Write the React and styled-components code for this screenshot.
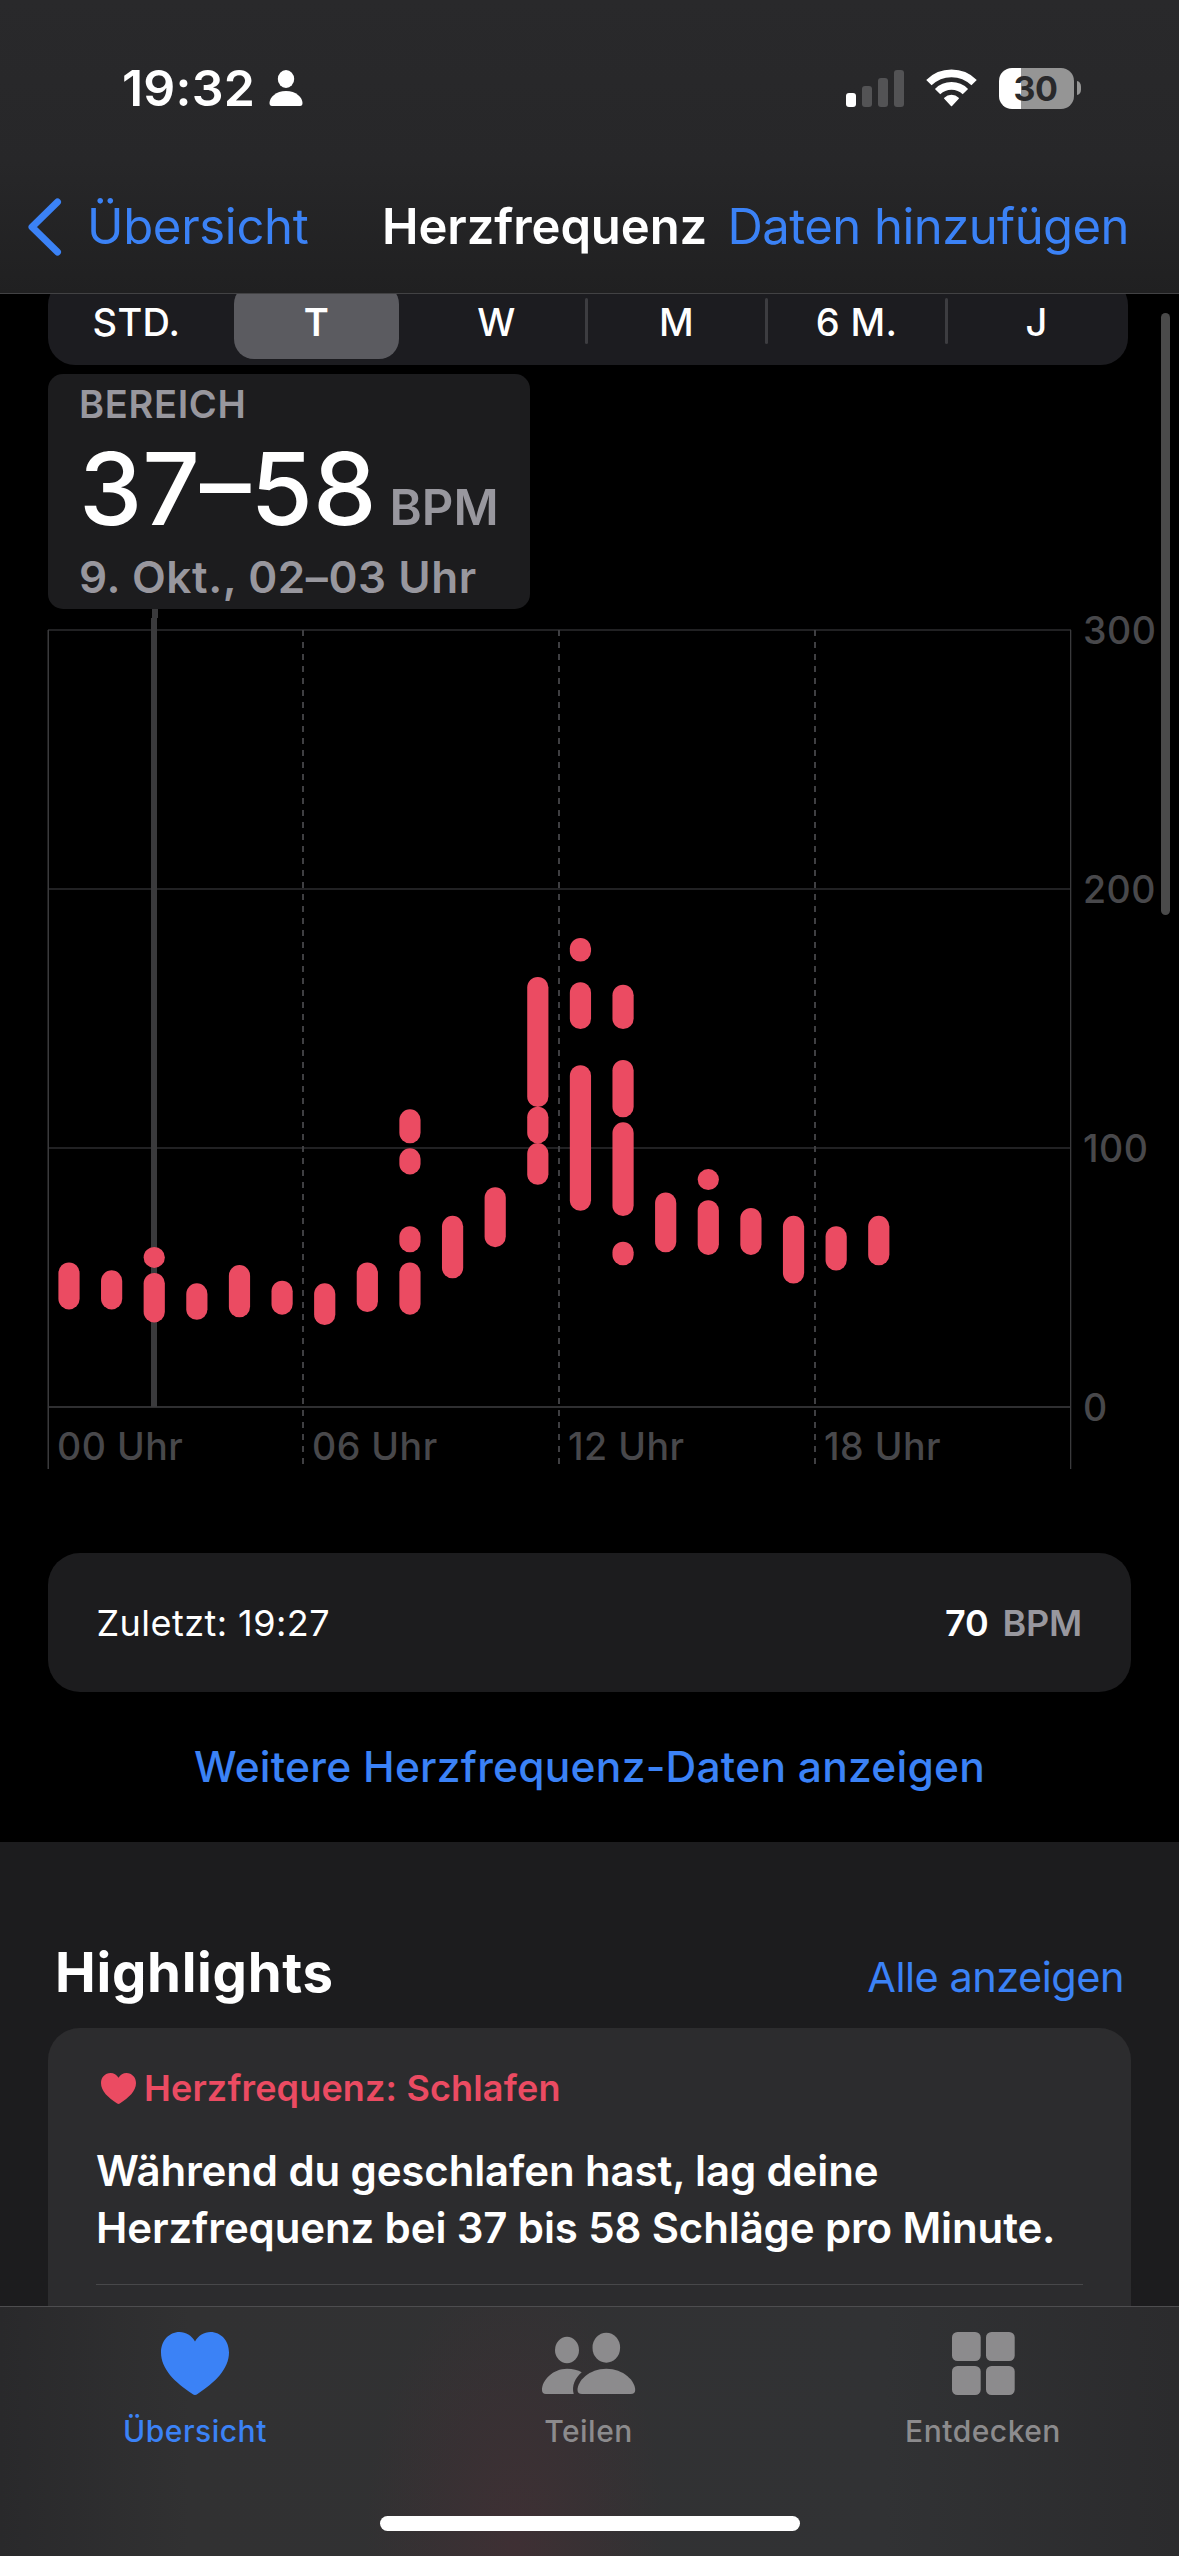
import React from 'react'
import styled, { createGlobalStyle } from 'styled-components'

const GlobalStyle = createGlobalStyle`
  * {
    box-sizing: border-box;
  }
  body {
    margin: 0;
    background: #000;
    font-family: Inter, 'Liberation Sans', sans-serif;
    color: #fff;
  }
`
const blue = '#3b82f6'
const pink = '#eb4b62'
const gray = '#98979e'

const Page = styled.div`
  display: flex;
  flex-direction: column;
  width: 1179px;
  height: 2556px;
  overflow: hidden;
  background: #000;
  position: relative;
`
const Header = styled.header`
  flex: none;
  height: 294px;
  background: linear-gradient(#29292b, #272729 55%, #202021);
  border-bottom: 1px solid #424244;
  position: relative;
  z-index: 1;
`
const StatusBar = styled.div`
  display: flex;
  justify-content: space-between;
  align-items: center;
  height: 176px;
  padding: 0 98px 0 122px;
`
const StatusGroup = styled.div`
  display: flex;
  align-items: center;
  gap: ${(props) => props.$gap}px;
`
const Time = styled.span`
  font-size: 50px;
  font-weight: 600;
  line-height: 60px;
  letter-spacing: 0.2px;
`
const Battery = styled.div`
  display: flex;
  align-items: center;
  gap: 3px;
`
const BatteryBody = styled.div`
  width: 75px;
  height: 41px;
  padding-right: 2px;
  border-radius: 13px;
  background: linear-gradient(90deg, #fff 30%, #959595 30%);
  color: #29292b;
  font-size: 34px;
  font-weight: 700;
  line-height: 41px;
  text-align: center;
  letter-spacing: -0.5px;
`
const BatteryNub = styled.div`
  width: 4px;
  height: 14px;
  border-radius: 0 5px 5px 0 / 0 7px 7px 0;
  background: #959595;
`
const Nav = styled.nav`
  display: flex;
  align-items: center;
  height: 102px;
  padding: 0 50px 0 28px;
  font-size: 49px;
  line-height: 60px;
  white-space: nowrap;
`
const BackLink = styled.a`
  display: flex;
  align-items: center;
  gap: 25px;
  width: 354px;
  color: ${blue};
  letter-spacing: -0.3px;
`
const NavTitle = styled.h1`
  margin: 0;
  font-size: 49px;
  font-weight: 600;
  letter-spacing: -0.1px;
`
const NavAction = styled.a`
  margin-left: auto;
  color: ${blue};
  letter-spacing: -0.55px;
`
const Content = styled.main`
  flex: 1;
  min-height: 0;
  overflow: hidden;
  display: flex;
  flex-direction: column;
`
const Segments = styled.div`
  flex: none;
  display: grid;
  grid-template-columns: repeat(6, 180px);
  width: 1080px;
  height: 87px;
  margin: -16px 0 0 48px;
  border-radius: 27px;
  background: #1c1c20;
`
const Segment = styled.div`
  display: flex;
  align-items: center;
  justify-content: center;
  margin: 6px 9px 6px 6px;
  border-radius: 20px;
  background: ${(props) => (props.$active ? '#5b5b60' : 'transparent')};
  font-size: 38px;
  font-weight: ${(props) => (props.$active ? 600 : 500)};
  line-height: 74px;
  letter-spacing: 0.3px;
  position: relative;

  &::after {
    content: '';
    display: ${(props) => (props.$divider ? 'block' : 'none')};
    position: absolute;
    right: -9px;
    top: 14px;
    width: 3px;
    height: 46px;
    border-radius: 2px;
    background: #3d3d41;
  }
`
const RangeCard = styled.section`
  flex: none;
  width: 482px;
  height: 235px;
  margin: 9px 0 0 48px;
  padding: 10px 0 0 31px;
  border-radius: 15px;
  background: #1c1c1e;
`
const RangeLabel = styled.div`
  font-size: 38px;
  font-weight: 600;
  line-height: 40px;
  letter-spacing: 0.7px;
  color: ${gray};
`
const RangeValue = styled.div`
  display: flex;
  align-items: baseline;
  gap: 13px;
  margin-top: 10px;
  white-space: nowrap;
`
const RangeNumber = styled.span`
  font-size: 101px;
  font-weight: 500;
  line-height: 109px;
`
const RangeUnit = styled.span`
  font-size: 49px;
  font-weight: 600;
  color: ${gray};
`
const RangeDate = styled.div`
  margin-top: 12px;
  font-size: 44px;
  font-weight: 600;
  line-height: 44px;
  letter-spacing: 0.6px;
  white-space: nowrap;
  color: ${gray};
`
const ChartSvg = styled.svg`
  flex: none;
  display: block;

  text {
    font-size: 37.5px;
    font-weight: 500;
    letter-spacing: 0.5px;
    fill: #48484b;
  }
`
const LatestCard = styled.section`
  flex: none;
  display: flex;
  align-items: center;
  width: 1083px;
  height: 139px;
  margin: 73px 0 0 48px;
  padding: 0 49px 0 48.5px;
  border-radius: 32px;
  background: #1c1c1e;
  font-size: 36px;
  letter-spacing: 0.45px;
`
const LatestValue = styled.span`
  margin-left: auto;
  font-weight: 600;
  letter-spacing: -0.3px;
`
const LatestUnit = styled.span`
  margin-left: 14px;
  font-weight: 600;
  letter-spacing: -0.2px;
  color: ${gray};
`
const MoreLink = styled.a`
  flex: none;
  height: 150px;
  line-height: 150px;
  text-align: center;
  font-size: 42.5px;
  font-weight: 500;
  letter-spacing: 0.25px;
  color: ${blue};
`
const Highlights = styled.section`
  flex: 1;
  min-height: 0;
  padding: 97px 48px 0;
  background: #1c1c1e;
`
const HighlightsHead = styled.div`
  display: flex;
  justify-content: space-between;
  align-items: baseline;
  padding: 0 7px;
  height: 89px;
`
const HighlightsTitle = styled.h2`
  margin: 0;
  font-size: 54.5px;
  font-weight: 700;
  line-height: 66px;
  letter-spacing: 0.7px;
`
const ShowAll = styled.a`
  font-size: 41.5px;
  letter-spacing: -0.5px;
  color: ${blue};
`
const HighlightCard = styled.article`
  height: 330px;
  padding: 39px 48px 0;
  border-radius: 32px;
  background: #2c2c2e;
`
const HighlightName = styled.div`
  display: flex;
  align-items: center;
  gap: 8px;
  padding-left: 5px;
  font-size: 36px;
  font-weight: 600;
  line-height: 43px;
  letter-spacing: 0.15px;
  color: ${pink};
`
const HighlightText = styled.p`
  margin: 32px 0 28px;
  font-size: 42px;
  font-weight: 600;
  line-height: 57px;
  letter-spacing: -0.13px;
  white-space: nowrap;
`
const Divider = styled.div`
  height: 1px;
  background: #48484a;
`
const TabBar = styled.footer`
  flex: none;
  display: grid;
  grid-template-columns: 390px 397px 392px;
  align-content: start;
  height: 250px;
  border-top: 1px solid #4d4d4f;
  background:
    radial-gradient(ellipse 150px 280px at 515px 240px, rgba(76, 46, 53, 0.5), transparent),
    linear-gradient(90deg, #29292b, #313132 16%, #313234 75%, #2b2b2d);
`
const Tab = styled.a`
  display: flex;
  flex-direction: column;
  align-items: center;
  padding-top: 25px;
  color: ${(props) => (props.$active ? blue : '#8c8b8d')};
  font-size: 30px;
  font-weight: 500;
  line-height: 36px;
  letter-spacing: 0.5px;

  span {
    margin-top: 18px;
  }
`
const HomeIndicator = styled.div`
  grid-column: 1 / -1;
  justify-self: center;
  width: 420px;
  height: 15px;
  margin-top: 67px;
  border-radius: 8px;
  background: #fff;
`
const ScrollThumb = styled.div`
  position: absolute;
  left: 1161px;
  top: 313px;
  width: 9px;
  height: 602px;
  border-radius: 5px;
  background: #4a4a4a;
`

// [hour, min, max] in beats per minute
const ranges = [
  [0, 42, 52],
  [1, 42, 49],
  [2, 58, 58],
  [2, 37, 48],
  [3, 38, 44],
  [4, 39, 51],
  [5, 40, 45],
  [6, 36, 44],
  [7, 41, 52],
  [8, 106, 111],
  [8, 94, 96],
  [8, 64, 66],
  [8, 40, 52],
  [9, 54, 70],
  [10, 66, 81],
  [11, 120, 162],
  [11, 106, 112],
  [11, 90, 98],
  [12, 176, 177],
  [12, 150, 160],
  [12, 80, 128],
  [13, 150, 159],
  [13, 116, 130],
  [13, 78, 106],
  [13, 59, 60],
  [14, 64, 79],
  [15, 88, 88],
  [15, 63, 76],
  [16, 63, 73],
  [17, 52, 70],
  [18, 57, 66],
  [19, 59, 70],
]

const hourX = (hour) => 69 + hour * 42.62
const bpmY = (bpm) => 1408 - bpm * 2.596

const Chart = () => (
  <ChartSvg width="1179" height="871" viewBox="0 609 1179 871">
    {[629, 888, 1147].map((y) => (
      <rect key={y} x="48" y={y} width="1023" height="2" fill="#212123" />
    ))}
    <rect x="48" y="1406" width="1023" height="2" fill="#2f2f31" />
    <rect x="47.5" y="630" width="1.5" height="839" fill="#3a3a3c" />
    <rect x="1070" y="630" width="1.3" height="839" fill="#3a3a3c" />
    {[303, 559, 815].map((x) => (
      <line key={x} x1={x} x2={x} y1="630" y2="1469" stroke="#3f3f42" strokeWidth="2" strokeDasharray="6 6" />
    ))}
    <rect x="152" y="609" width="6" height="9" fill="#3a3a3c" />
    <rect x="151" y="618" width="6" height="789" fill="#3a3a3c" />
    {ranges.map(([hour, min, max]) => (
      <rect
        key={`${hour}-${min}`}
        x={hourX(hour) - 10.6}
        y={bpmY(max) - 10.5}
        width="21.2"
        height={(max - min) * 2.596 + 21}
        rx="10.6"
        fill={pink}
      />
    ))}
    <text x="1083" y="643.5">300</text>
    <text x="1083" y="902.5">200</text>
    <text x="1083" y="1161.5">100</text>
    <text x="1083" y="1420.5">0</text>
    <text x="57" y="1460">00 Uhr</text>
    <text x="312" y="1460">06 Uhr</text>
    <text x="568" y="1460">12 Uhr</text>
    <text x="824" y="1460">18 Uhr</text>
  </ChartSvg>
)

const Heart = ({ width, height }) => (
  <svg width={width} height={height} viewBox="0 0 68 63" preserveAspectRatio="none" fill="currentColor">
    <path d="M34 9.5C30.5 3.5 25 0 18.5 0 8 0 0 8.8 0 20.5 0 37 14 50.5 31.5 62Q34 64 36.5 62C54 50.5 68 37 68 20.5 68 8.8 60 0 49.5 0 43 0 37.5 3.5 34 9.5Z" />
  </svg>
)

const PersonIcon = () => (
  <svg width="34" height="36" viewBox="0 0 34 36" fill="#fff">
    <ellipse cx="17" cy="9" rx="8.2" ry="9" />
    <path d="M3 36Q.5 36 .5 33C.5 27.5 7 21 17 21S33.5 27.5 33.5 33Q33.5 36 31 36Z" />
  </svg>
)

const SignalIcon = () => (
  <svg width="58" height="37" viewBox="0 0 58 37">
    <rect x="0" y="23" width="10" height="14" rx="3" fill="#fff" />
    <rect x="16" y="16" width="10" height="21" rx="3" fill="#535355" />
    <rect x="32" y="8" width="10" height="29" rx="3" fill="#535355" />
    <rect x="48" y="0" width="10" height="37" rx="3" fill="#535355" />
  </svg>
)

const WifiIcon = () => (
  <svg width="51" height="38" viewBox="0 0 51 38" fill="none" stroke="#fff" strokeWidth="7.6">
    <path d="M2.9 13.6A32.2 32.2 0 0 1 48.1 13.6" />
    <path d="M11.6 22.6A19.8 19.8 0 0 1 39.4 22.6" />
    <path d="M18.8 29.3A9.6 9.6 0 0 1 32.2 29.3L25.5 36.5Z" fill="#fff" strokeWidth="1.5" strokeLinejoin="round" />
  </svg>
)

const PeopleIcon = () => (
  <svg width="94" height="63" viewBox="12 12 94 63" fill="currentColor">
    <ellipse cx="37" cy="30" rx="12" ry="13.2" />
    <ellipse cx="76.3" cy="27.7" rx="13.8" ry="15" />
    <path d="M16 74Q12 74 12 70C12 60 23 48.7 37 48.7 43 48.7 48 50 51.7 52.3 45 58 41.5 66 43.7 74Z" />
    <path d="M52 74Q47.5 74 47.5 70C47.5 61 59 48.7 76.3 48.7S105.2 61 105.2 70Q105.2 74 100.7 74Z" />
  </svg>
)

const GridIcon = () => (
  <svg width="63" height="63" viewBox="0 0 63 63" fill="currentColor">
    <rect width="28.7" height="29" rx="5.5" />
    <rect x="34" width="28.7" height="29" rx="5.5" />
    <rect y="34" width="28.7" height="29" rx="5.5" />
    <rect x="34" y="34" width="28.7" height="29" rx="5.5" />
  </svg>
)

const App = () => {
  return (
    <Page>
      <GlobalStyle />
      <Header>
        <StatusBar>
          <StatusGroup $gap={14}>
            <Time>19:32</Time>
            <PersonIcon />
          </StatusGroup>
          <StatusGroup $gap={22}>
            <SignalIcon />
            <WifiIcon />
            <Battery>
              <BatteryBody>30</BatteryBody>
              <BatteryNub />
            </Battery>
          </StatusGroup>
        </StatusBar>
        <Nav>
          <BackLink>
            <svg width="34" height="58" viewBox="0 0 34 58" fill="none" stroke={blue} strokeWidth="7" strokeLinecap="round" strokeLinejoin="round">
              <path d="M29.5 4L4 29 29.5 54" />
            </svg>
            Übersicht
          </BackLink>
          <NavTitle>Herzfrequenz</NavTitle>
          <NavAction>Daten hinzufügen</NavAction>
        </Nav>
      </Header>

      <Content>
        <Segments>
          <Segment>STD.</Segment>
          <Segment $active>T</Segment>
          <Segment $divider>W</Segment>
          <Segment $divider>M</Segment>
          <Segment $divider>6 M.</Segment>
          <Segment>J</Segment>
        </Segments>
        <RangeCard>
          <RangeLabel>BEREICH</RangeLabel>
          <RangeValue>
            <RangeNumber>37–58</RangeNumber>
            <RangeUnit>BPM</RangeUnit>
          </RangeValue>
          <RangeDate>9. Okt., 02–03 Uhr</RangeDate>
        </RangeCard>
        <Chart />
        <LatestCard>
          <span>Zuletzt: 19:27</span>
          <LatestValue>70</LatestValue>
          <LatestUnit>BPM</LatestUnit>
        </LatestCard>
        <MoreLink>Weitere Herzfrequenz-Daten anzeigen</MoreLink>
        <Highlights>
          <HighlightsHead>
            <HighlightsTitle>Highlights</HighlightsTitle>
            <ShowAll>Alle anzeigen</ShowAll>
          </HighlightsHead>
          <HighlightCard>
            <HighlightName>
              <Heart width={35} height={31} />
              Herzfrequenz: Schlafen
            </HighlightName>
            <HighlightText>
              Während du geschlafen hast, lag deine
              <br />
              Herzfrequenz bei 37 bis 58 Schläge pro Minute.
            </HighlightText>
            <Divider />
          </HighlightCard>
        </Highlights>
      </Content>

      <TabBar>
        <Tab $active>
          <Heart width={68} height={63} />
          <span>Übersicht</span>
        </Tab>
        <Tab>
          <PeopleIcon />
          <span>Teilen</span>
        </Tab>
        <Tab>
          <GridIcon />
          <span>Entdecken</span>
        </Tab>
        <HomeIndicator />
      </TabBar>
      <ScrollThumb />
    </Page>
  )
}

export default App
